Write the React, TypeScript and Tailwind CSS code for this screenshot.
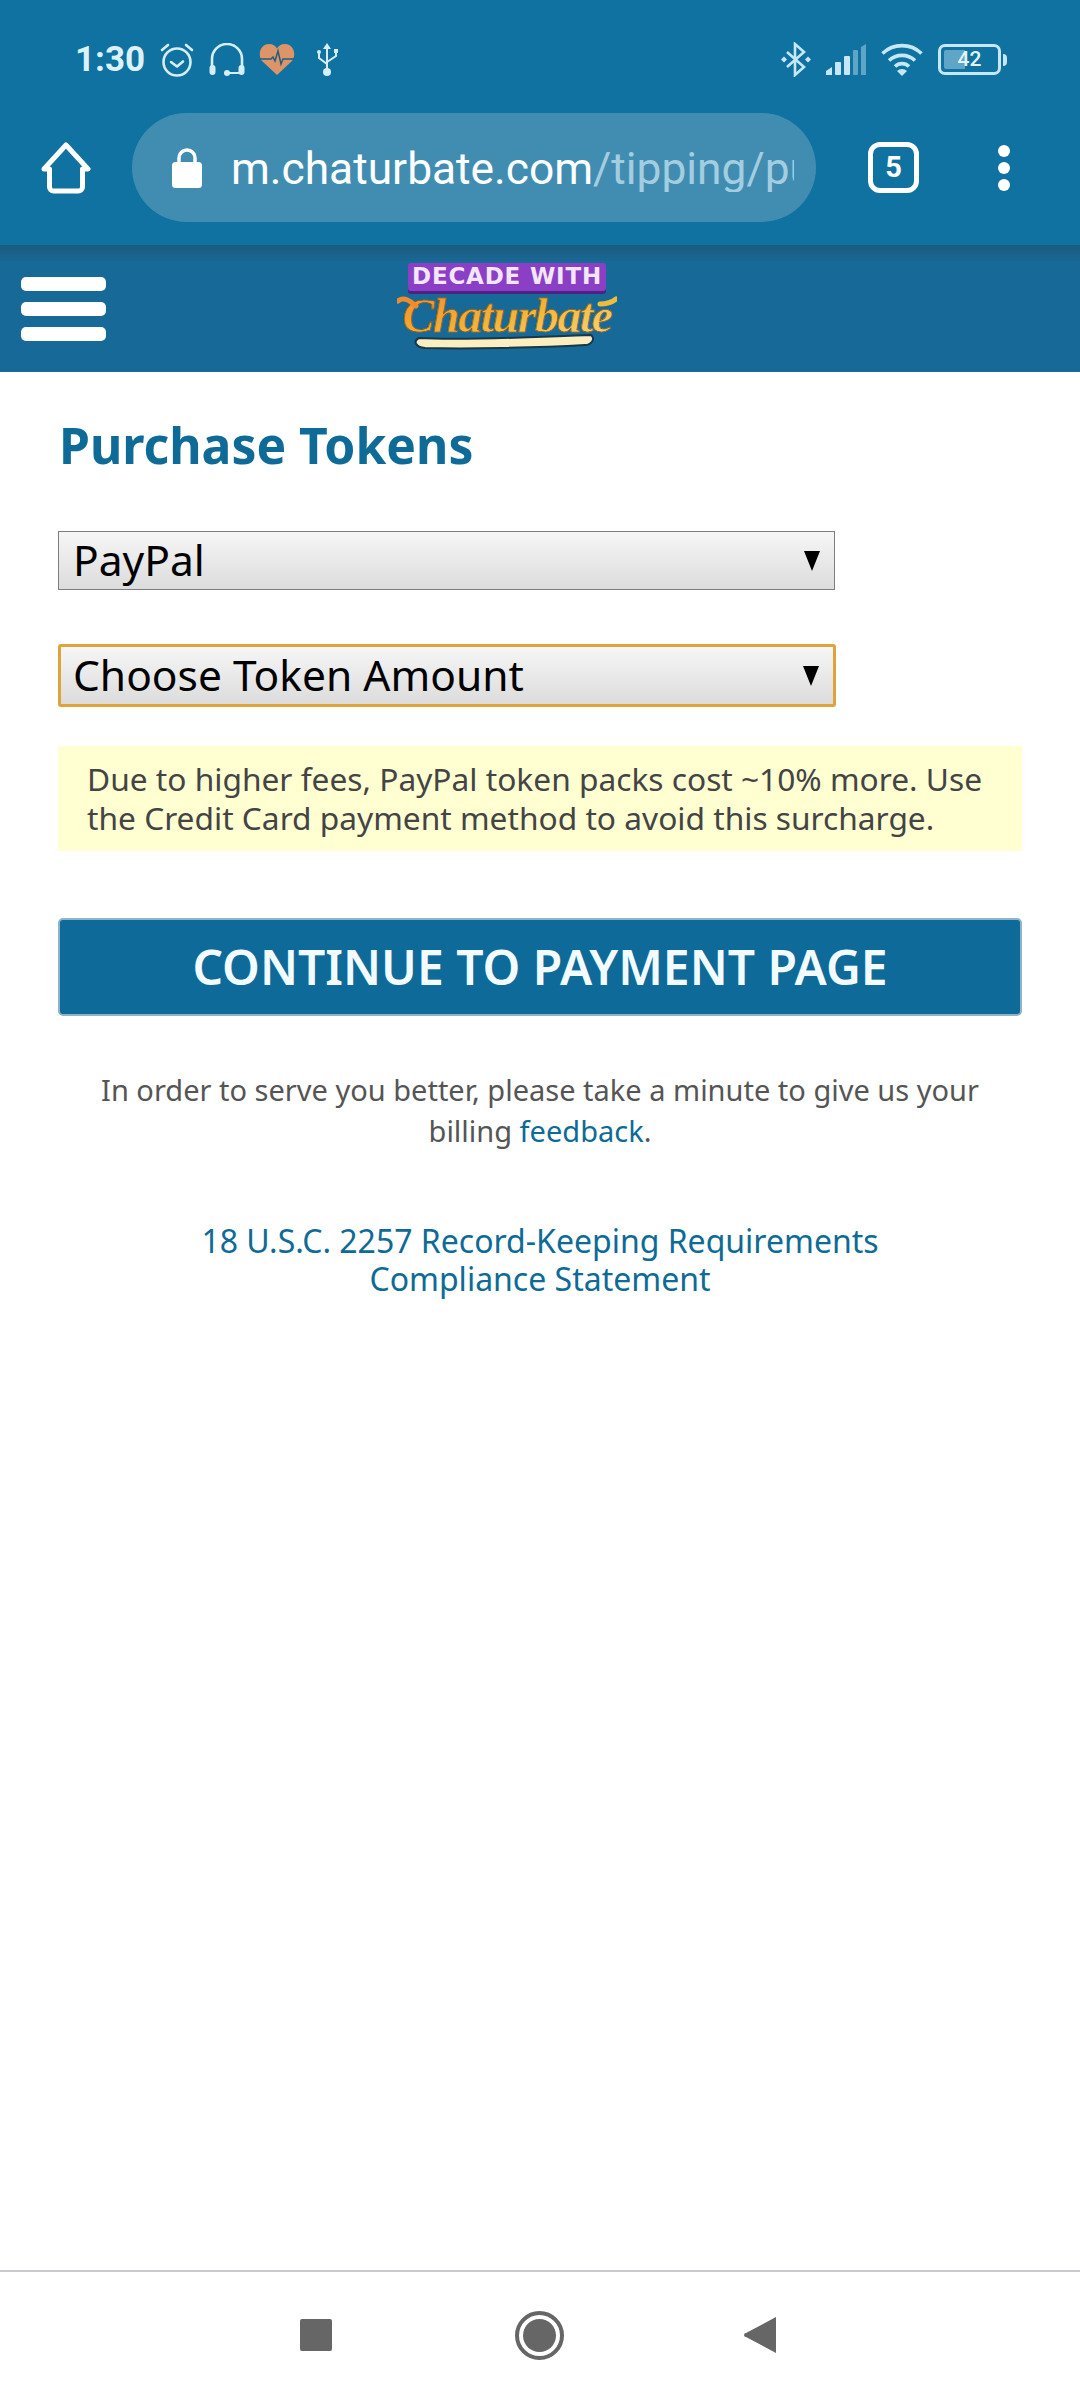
const sans = "font-['Noto_Sans',sans-serif]";

function Alarm() {
  return (
    <svg width="36" height="36" viewBox="0 0 36 36" fill="none" stroke="#d6eef8" strokeWidth="2.6" strokeLinecap="round" strokeLinejoin="round">
      <circle cx="18" cy="20" r="13.5" />
      <path d="M12 20l6 4.5 6-5" />
      <path d="M3 8l6-5M33 8l-6-5" />
    </svg>
  );
}

function Headset() {
  return (
    <svg width="36" height="34" viewBox="0 0 36 34" fill="none">
      <path d="M3 26V16a15 15 0 0 1 30 0v10" stroke="#d6eef8" strokeWidth="2.6" />
      <rect x="0.5" y="22" width="6" height="10" rx="3" fill="#d6eef8" />
      <rect x="29.5" y="22" width="6" height="10" rx="3" fill="#d6eef8" />
      <path d="M18 30h12" stroke="#d6eef8" strokeWidth="2" />
      <circle cx="18" cy="30" r="3" fill="#d6eef8" />
    </svg>
  );
}

function Heart() {
  return (
    <svg width="36" height="33" viewBox="0 0 36 33">
      <path d="M18 32L3 18C-2 11 2 1 10 1c4 0 6.500 2 8 4.500C19.500 3 22 1 26 1c8 0 12 10 7 17z" fill="#dc9468" />
      <path d="M1 16h11l2-2 2 4 3-10 3 13 2-5h11" fill="none" stroke="#1c5f80" strokeWidth="1.500" />
    </svg>
  );
}

function Usb() {
  return (
    <svg width="24" height="34" viewBox="0 0 24 34" fill="none" stroke="#d6eef8" strokeWidth="2">
      <path d="M11 4v25" />
      <path d="M11 0l4 6H7z" fill="#d6eef8" stroke="none" />
      <circle cx="11" cy="29" r="4" fill="#d6eef8" stroke="none" />
      <path d="M3 10v5l8 6M20 9v4l-9 6" />
      <circle cx="3" cy="9" r="2" fill="#d6eef8" stroke="none" />
      <rect x="18" y="6" width="4" height="4" fill="#d6eef8" stroke="none" />
    </svg>
  );
}

function Bluetooth() {
  return (
    <svg width="30" height="35" viewBox="0 0 30 35" fill="none">
      <path d="M6 10l17 15-9 8V2l9 8L6 25" stroke="#c6e8f6" strokeWidth="2.600" />
      <path d="M3 14.500l3 3-3 3-3-3zM27 14.500l3 3-3 3-3-3z" fill="#c6e8f6" />
    </svg>
  );
}

function Signal() {
  return (
    <svg width="40" height="31" viewBox="0 0 40 31">
      <path d="M0 31v-4l6-4v8z" fill="#c6e8f6" />
      <rect x="9" y="18" width="6" height="13" rx="1" fill="#c6e8f6" />
      <rect x="18" y="12" width="6" height="19" rx="1" fill="#c6e8f6" />
      <rect x="27" y="6" width="5" height="25" rx="1" fill="#5ea5c6" />
      <path d="M35 3l5-3v31h-5z" fill="#5ea5c6" />
    </svg>
  );
}

function Wifi() {
  return (
    <svg width="42" height="33" viewBox="0 0 42 33" fill="none" stroke="#c6e8f6" strokeWidth="3.600">
      <path d="M1.500 10.500a28 28 0 0 1 39 0" />
      <path d="M8 17.500a19 19 0 0 1 26 0" />
      <path d="M14 23.500a10 10 0 0 1 14 0" />
      <path d="M21 33l-5-5a7 7 0 0 1 10 0z" fill="#c6e8f6" stroke="none" />
    </svg>
  );
}

function Battery() {
  return (
    <div className="flex items-center gap-[2px]">
      <div className="relative flex h-[31px] w-[63px] items-center justify-center overflow-hidden rounded-[7px] border-[3px] border-[#c6e8f6]">
        <div className="absolute bottom-[3px] left-[3px] top-[3px] w-[21px] rounded-l-[2px] bg-[#5ea5c6]" />
        <span className="relative font-['Roboto',sans-serif] text-[21px] font-medium leading-none text-[#e2f4fb]">42</span>
      </div>
      <div className="h-[12px] w-[4px] rounded-r-full bg-[#c6e8f6]" />
    </div>
  );
}

function HomeIcon() {
  return (
    <svg width="50" height="52" viewBox="0 0 50 52" fill="none" stroke="#ffffff" strokeWidth="5" strokeLinejoin="round" strokeLinecap="round">
      <path d="M3 27L25 3l22 24h-5.500v18a4 4 0 0 1-4 4h-25a4 4 0 0 1-4-4V27z" />
    </svg>
  );
}

function LockIcon() {
  return (
    <svg width="30" height="40" viewBox="0 0 30 40">
      <path d="M7 15V10a8 8 0 0 1 16 0v5" fill="none" stroke="#ffffff" strokeWidth="3.500" />
      <rect x="0" y="14" width="30" height="26" rx="3.500" fill="#ffffff" />
    </svg>
  );
}

function Logo() {
  return (
    <div className="flex h-[92px] w-[220px] flex-col items-center">
      <div className="flex h-[28px] items-center justify-center rounded-[3px] bg-[#8a3fc4] px-[4px] shadow-[0_3px_0_#4f2185]">
        <span className="font-['DejaVu_Sans',sans-serif] text-[23px] font-bold leading-none tracking-[0.8px] whitespace-nowrap text-[#f3e6fb]">DECADE WITH</span>
      </div>
      <div className="relative flex h-[62px] w-full justify-center">
        <span className="bg-gradient-to-br from-[#f08a2c] via-[#f4b73a] to-[#f8e08a] bg-clip-text font-['Liberation_Serif',serif] text-[48px] font-bold italic leading-[50px] tracking-[-1.500px] text-transparent [-webkit-text-stroke:0.6px_#6d4310]">Chaturbate</span>
        <svg className="absolute inset-0" width="220" height="62" viewBox="0 0 220 62">
          <path d="M1 10c6-5 12 0 18 5" fill="none" stroke="#ef8a2d" strokeWidth="5" strokeLinecap="round" />
          <path d="M203 13c6 0 11-1 16-5" fill="none" stroke="#f0bc3c" strokeWidth="5" strokeLinecap="round" />
          <path d="M22 47c50 3 130-2 172-3 5 4 0 10-6 10-50 3-120 4-160 3-10-1-12-7-6-10z" fill="#fdeebf" stroke="#17384a" strokeWidth="2" />
        </svg>
      </div>
    </div>
  );
}

function SelectBox({ label, focused }: { label: string; focused?: boolean }) {
  return (
    <div
      className={`flex items-center justify-between bg-gradient-to-b from-[#f6f6f6] to-[#dcdcdc] pr-[14px] text-black ${
        focused ? "h-[63px] w-[778px] rounded-[3px] border-[3px] border-[#dfa33c] pl-[12px]" : "h-[59px] w-[777px] border border-[#7d7d7d] pl-[14px]"
      }`}
    >
      <span className={`${sans} text-[42.5px] leading-none`}>{label}</span>
      <span className="h-0 w-0 border-x-[8px] border-t-[20px] border-x-transparent border-t-black" />
    </div>
  );
}

export default function App() {
  return (
    <div className={`flex h-[2400px] w-[1080px] flex-col overflow-hidden bg-white ${sans}`}>
      {/* Status bar + browser toolbar */}
      <div className="h-[245px] bg-[#0f72a0]">
        <div className="flex h-[113px] items-center justify-between pl-[75px] pr-[73px] pt-[6px]">
          <div className="flex items-center">
            <span className="mr-[14px] font-['Roboto',sans-serif] text-[35px] font-bold leading-none text-[#dcf1fa]">1:30</span>
            <div className="flex items-center gap-[14px]">
              <Alarm />
              <Headset />
              <Heart />
              <div className="ml-[7px]"><Usb /></div>
            </div>
          </div>
          <div className="flex items-center gap-[15px]">
            <Bluetooth />
            <Signal />
            <Wifi />
            <Battery />
          </div>
        </div>
        <div className="flex items-center pl-[41px]">
          <HomeIcon />
          <div className="ml-[41px] flex h-[109px] w-[684px] items-center rounded-full bg-[#418db2] pl-[40px] pr-[22px]">
            <LockIcon />
            <div className="ml-[29px] flex-1 overflow-hidden whitespace-nowrap pt-[4px] font-['Roboto',sans-serif] text-[44.3px] leading-none">
              <span className="text-white">m.chaturbate.com</span>
              <span className="text-[#a4cde0]">/tipping/purchase_tokens/</span>
            </div>
          </div>
          <div className="ml-[52px] flex h-[51px] w-[51px] items-center justify-center rounded-[12px] border-[5px] border-white font-['Roboto',sans-serif] text-[29px] font-bold text-white">5</div>
          <div className="ml-[79px] flex flex-col gap-[5px]">
            <div className="h-[12px] w-[12px] rounded-full bg-white" />
            <div className="h-[12px] w-[12px] rounded-full bg-white" />
            <div className="h-[12px] w-[12px] rounded-full bg-white" />
          </div>
        </div>
      </div>

      {/* Site header */}
      <div className="flex h-[127px] items-center bg-gradient-to-b from-[#1b5a7e] via-[#176a98] via-[14%] to-[#176a98] pl-[21px]">
        <div className="flex w-[85px] flex-col gap-[11px]">
          <div className="h-[14px] rounded-[5px] bg-white" />
          <div className="h-[14px] rounded-[5px] bg-white" />
          <div className="h-[14px] rounded-[5px] bg-white" />
        </div>
        <div className="ml-[291px]"><Logo /></div>
      </div>

      {/* Purchase form */}
      <div className="flex-1 px-[58px]">
        <h1 className="mt-[45px] pl-[1px] text-[49.800px] font-bold leading-[56px] text-[#0e6a96]">Purchase Tokens</h1>
        <div className="mt-[58px]"><SelectBox label="PayPal" /></div>
        <div className="mt-[54px]"><SelectBox label="Choose Token Amount" focused /></div>
        <div className="mt-[39px] h-[105px] w-[964px] bg-[#ffffd2] pl-[29px] pt-[13px] text-[31.700px] leading-[39px] text-[#444444]">
          Due to higher fees, PayPal token packs cost ~10% more. Use the Credit Card payment method to avoid this surcharge.
        </div>
        <button className="mt-[67px] flex h-[98px] w-[964px] items-center justify-center rounded-[5px] border-2 border-[#8fb3c7] bg-[#0d6a99] text-[48px] leading-none font-semibold text-[#f2fbff]">
          CONTINUE TO PAYMENT PAGE
        </button>
        <p className="mt-[53px] w-[964px] text-center text-[29px] leading-[41px] text-[#555555]">
          In order to serve you better, please take a minute to give us your billing <span className="text-[#0e6a96]">feedback</span>.
        </p>
        <p className="mx-auto mt-[71px] w-[700px] text-center text-[32px] leading-[38px] text-[#0e6a96]">
          18 U.S.C. 2257 Record-Keeping Requirements Compliance Statement
        </p>
      </div>

      {/* Android nav bar */}
      <div className="flex h-[130px] items-start justify-center border-t-2 border-[#c9c9ce] pr-[5px] pt-[39px]">
        <div className="mt-[8px] h-[32px] w-[32px] rounded-[2px] bg-[#666666]" />
        <div className="ml-[183px] flex h-[49px] w-[49px] items-center justify-center rounded-full border-[4px] border-[#666666]">
          <div className="h-[33px] w-[33px] rounded-full bg-[#666666]" />
        </div>
        <svg className="ml-[180px] mt-[6px]" width="32" height="36" viewBox="0 0 32 36">
          <path d="M32 0v36L2 20a2 2 0 0 1 0-4z" fill="#666666" />
        </svg>
      </div>
    </div>
  );
}
